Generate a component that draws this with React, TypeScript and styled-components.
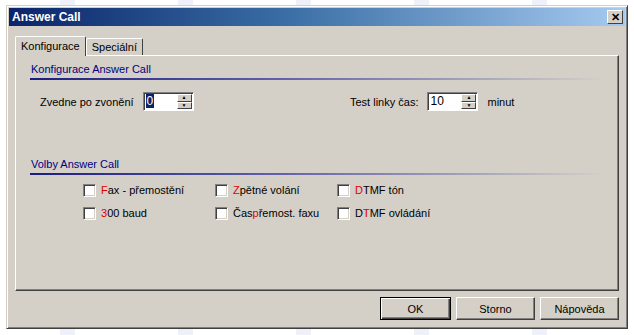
import styled, { createGlobalStyle } from 'styled-components';

const Global = createGlobalStyle`
	html, body {
		margin: 0;
		padding: 0;
		background: #ffffff;
		font-family: "Liberation Sans", Arial, sans-serif;
		font-size: 11px;
	}
`;

const Page = styled.div`
	width: 634px;
	height: 335px;
	padding: 5px 0 0 6px;
	box-sizing: border-box;
	background:
		linear-gradient(90deg, transparent 0 60px, #eef0fa 60px 75px, transparent 75px) 0 0 / 118px 100%,
		#ffffff;
`;

const Dialog = styled.div`
	width: 622px;
	height: 324px;
	box-sizing: border-box;
	background: #d4d0c8;
	border: 1px solid;
	border-color: #d4d0c8 #404040 #404040 #d4d0c8;
	box-shadow: inset 1px 1px 0 #ffffff, inset -1px -1px 0 #808080;
	padding: 2px;
	display: flex;
	flex-direction: column;
`;

const TitleBar = styled.div`
	height: 18px;
	display: flex;
	align-items: center;
	justify-content: space-between;
	padding: 0 2px 0 3px;
	background: linear-gradient(90deg, #0a246a 0%, #3a6ea5 45%, #a6caf0 100%);
	color: #ffffff;
	font-weight: bold;
	font-size: 12px;
`;

const CloseButton = styled.div`
	width: 14px;
	height: 12px;
	background: #d4d0c8;
	border: 1px solid;
	border-color: #ffffff #404040 #404040 #ffffff;
	display: flex;
	align-items: center;
	justify-content: center;
	color: #000;
	font-size: 11px;
	font-weight: bold;
	line-height: 1;
`;

const Body = styled.div`
	flex: 1;
	display: flex;
	flex-direction: column;
	padding: 9px 6px 0 6px;
`;

const Tabs = styled.div`
	display: flex;
	align-items: flex-end;
	height: 20px;
	position: relative;
	z-index: 1;
`;

const Tab = styled.div<{ $active?: boolean }>`
	background: #d4d0c8;
	border: 1px solid;
	border-color: #ffffff #404040 transparent #ffffff;
	border-bottom: none;
	padding: 0 5px;
	height: ${p => (p.$active ? '20px' : '17px')};
	line-height: ${p => (p.$active ? '18px' : '17px')};
	margin-bottom: ${p => (p.$active ? '-1px' : '0')};
	box-sizing: border-box;
	border-radius: 2px 2px 0 0;
	color: #000;
`;

const Panel = styled.div`
	width: 604px;
	height: 236px;
	box-sizing: border-box;
	border: 1px solid;
	border-color: #ffffff #404040 #404040 #ffffff;
	box-shadow: inset -1px -1px 0 #808080;
	padding: 5px 14px 0 14px;
`;

const SectionTitle = styled.div`
	color: #000080;
	height: 17px;
	line-height: 16px;
	padding-left: 1px;
	border-bottom: 2px solid transparent;
	border-image: linear-gradient(90deg, #1c1c80 0%, #5a5aa8 40%, rgba(212, 208, 200, 0) 100%) 1;
`;

const Section = styled.div<{ $top: number }>`
	margin-top: ${p => p.$top}px;
`;

const FieldRow = styled.div`
	display: flex;
	align-items: center;
	padding-left: 10px;
	margin-top: 12px;
`;

const Field = styled.div<{ $width: number }>`
	display: flex;
	align-items: center;
	width: ${p => p.$width}px;
`;

const Label = styled.span`
	margin-right: 9px;
	color: #000;
`;

const Spin = styled.div`
	display: flex;
	width: 51px;
	height: 19px;
	box-sizing: border-box;
	border: 1px solid;
	border-color: #808080 #ffffff #ffffff #808080;
	box-shadow: inset 1px 1px 0 #404040;
	background: #ffffff;
	padding: 1px 1px 1px 2px;
`;

const SpinValue = styled.div<{ $selected?: boolean }>`
	flex: 1;
	font-size: 12px;
	line-height: 15px;
	span {
		${p => p.$selected && 'background: #0a246a; color: #ffffff;'}
		padding: 0 1px;
	}
`;

const SpinButtons = styled.div`
	display: flex;
	flex-direction: column;
	width: 15px;
`;

const SpinArrow = styled.div`
	flex: 1;
	background: #d4d0c8;
	border: 1px solid;
	border-color: #ffffff #404040 #404040 #ffffff;
	display: flex;
	align-items: center;
	justify-content: center;
	font-size: 5px;
	line-height: 1;
	color: #000;
`;

const Unit = styled.span`
	margin-left: 9px;
`;

const Options = styled.div`
	display: grid;
	grid-template-columns: 132px 122px 140px;
	row-gap: 7px;
	padding-left: 53px;
	margin-top: 7px;
`;

const Option = styled.label`
	display: flex;
	align-items: center;
	height: 16px;
	color: #000;
`;

const Box = styled.span`
	width: 13px;
	height: 13px;
	box-sizing: border-box;
	border: 1px solid;
	border-color: #808080 #ffffff #ffffff #808080;
	box-shadow: inset 1px 1px 0 #404040, inset -1px -1px 0 #d4d0c8;
	background: #ffffff;
	margin-right: 5px;
`;

const Hot = styled.span`
	color: #e00000;
`;

const Footer = styled.div`
	display: flex;
	justify-content: flex-end;
	gap: 5px;
	padding: 6px 0 0 0;
`;

const Button = styled.div<{ $default?: boolean; $width: number }>`
	width: ${p => p.$width}px;
	height: 23px;
	box-sizing: border-box;
	background: #d4d0c8;
	display: flex;
	align-items: center;
	justify-content: center;
	color: #000;
	border: 1px solid;
	border-color: ${p => (p.$default ? '#000' : '#ffffff #404040 #404040 #ffffff')};
	box-shadow: ${p =>
		p.$default ? 'inset 1px 1px 0 #ffffff, inset -1px -1px 0 #404040, inset -2px -2px 0 #808080' : 'inset -1px -1px 0 #808080'};
`;

const options: { hot: string; before?: string; rest: string }[] = [
	{ hot: 'F', rest: 'ax - přemostění' },
	{ hot: 'Z', rest: 'pětné volání' },
	{ hot: 'D', rest: 'TMF tón' },
	{ hot: '3', rest: '00 baud' },
	{ before: 'Čas', hot: 'p', rest: 'řemost. faxu' },
	{ before: 'D', hot: 'T', rest: 'MF ovládání' },
];

export default function App() {
	return (
		<Page>
			<Global />
			<Dialog>
				<TitleBar>
					<span>Answer Call</span>
					<CloseButton>✕</CloseButton>
				</TitleBar>
				<Body>
					<Tabs>
						<Tab $active>Konfigurace</Tab>
						<Tab>Speciální</Tab>
					</Tabs>
					<Panel>
						<SectionTitle>Konfigurace Answer Call</SectionTitle>
						<FieldRow>
							<Field $width={310}>
								<Label>Zvedne po zvonění</Label>
								<Spin>
									<SpinValue $selected><span>0</span></SpinValue>
									<SpinButtons>
										<SpinArrow>▲</SpinArrow>
										<SpinArrow>▼</SpinArrow>
									</SpinButtons>
								</Spin>
							</Field>
							<Field $width={200}>
								<Label>Test linky čas:</Label>
								<Spin>
									<SpinValue>10</SpinValue>
									<SpinButtons>
										<SpinArrow>▲</SpinArrow>
										<SpinArrow>▼</SpinArrow>
									</SpinButtons>
								</Spin>
								<Unit>minut</Unit>
							</Field>
						</FieldRow>
						<Section $top={45}>
							<SectionTitle>Volby Answer Call</SectionTitle>
							<Options>
								{options.map(o => (
									<Option key={o.rest}>
										<Box />
										<span>
											{o.before}
											<Hot>{o.hot}</Hot>
											{o.rest}
										</span>
									</Option>
								))}
							</Options>
						</Section>
					</Panel>
					<Footer>
						<Button $default $width={71}>OK</Button>
						<Button $width={79}>Storno</Button>
						<Button $width={79}>Nápověda</Button>
					</Footer>
				</Body>
			</Dialog>
		</Page>
	);
}
